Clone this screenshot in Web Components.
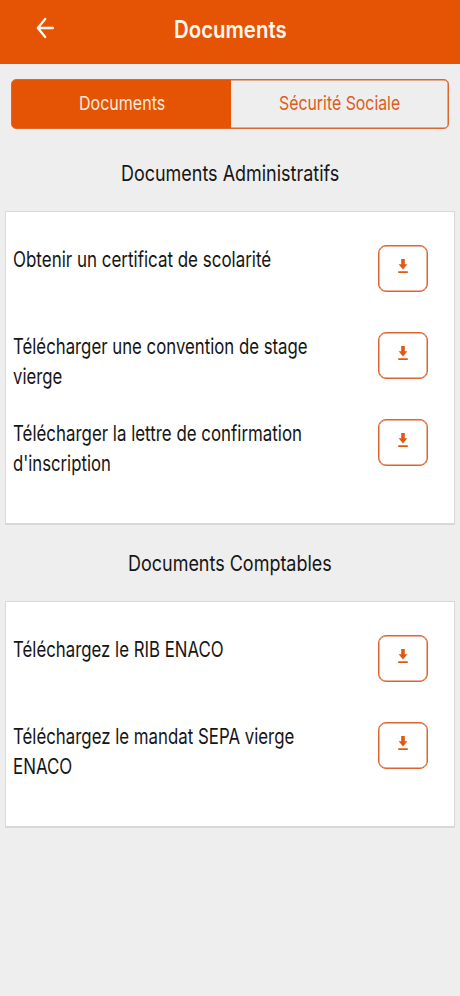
<!DOCTYPE html>
<html lang="fr">
<head>
<meta charset="utf-8">
<title>Documents</title>
<style>
    body {
        margin: 0;
        min-height: 996px;
        background: #eeeeee;
        color: #161616;
        font-family: Inter, "Liberation Sans", sans-serif;
        --brand: #e45404;
    }
</style>
</head>
<body>
<app-header><fit-line width="113">Documents</fit-line></app-header>
<tab-bar>
    <tab-item active><fit-line width="86">Documents</fit-line></tab-item>
    <tab-item><fit-line width="121">Sécurité Sociale</fit-line></tab-item>
</tab-bar>

<doc-section>
    <fit-line slot="title" width="218">Documents Administratifs</fit-line>
    <doc-row><fit-line width="258">Obtenir un certificat de scolarité</fit-line></doc-row>
    <doc-row>
        <fit-line width="295">Télécharger une convention de stage</fit-line>
        <fit-line width="49">vierge</fit-line>
    </doc-row>
    <doc-row>
        <fit-line width="289">Télécharger la lettre de confirmation</fit-line>
        <fit-line width="98">d'inscription</fit-line>
    </doc-row>
</doc-section>

<doc-section compact>
    <fit-line slot="title" width="204">Documents Comptables</fit-line>
    <doc-row><fit-line width="211">Téléchargez le RIB ENACO</fit-line></doc-row>
    <doc-row>
        <fit-line width="281">Téléchargez le mandat SEPA vierge</fit-line>
        <fit-line width="59">ENACO</fit-line>
    </doc-row>
</doc-section>

<script>
function makeTemplate(html) {
    const template = document.createElement("template");
    template.innerHTML = html;
    return template;
}

class BaseElement extends HTMLElement {
    constructor() {
        super();
        this.attachShadow({mode: "open"}).appendChild(this.constructor.template.content.cloneNode(true));
    }
}

class AppHeader extends BaseElement {
    static template = makeTemplate(`
        <style>
            :host {
                display: grid;
                grid-template-columns: 90px 1fr 90px;
                align-items: center;
                justify-items: center;
                box-sizing: border-box;
                height: 64px;
                padding-bottom: 4px;
                border-bottom: 1px solid #cc5a1c;
                background: var(--brand);
                color: #fff6ee;
                font-size: 24px;
                font-weight: 600;
                line-height: 29px;
            }
            svg {
                display: block;
                margin-bottom: 3px;
            }
        </style>
        <svg width="20" height="24" viewBox="0 0 20 24" fill="none" stroke="currentColor" stroke-width="2.3" stroke-linecap="round" stroke-linejoin="round">
            <path d="M10.2 3 2.8 12l7.4 9M3 12h15"/>
        </svg>
        <slot></slot>
    `);
}

class TabBar extends BaseElement {
    static template = makeTemplate(`
        <style>
            :host {
                display: grid;
                grid-template-columns: 1fr 1fr;
                box-sizing: border-box;
                height: 50px;
                margin: 15px 11px 0;
                border: 1px solid #d9662f;
                border-radius: 5px;
                box-shadow: inset 0 0 0 0.5px #d9662f;
                overflow: hidden;
            }
        </style>
        <slot></slot>
    `);
}

class TabItem extends BaseElement {
    static template = makeTemplate(`
        <style>
            :host {
                display: flex;
                align-items: center;
                justify-content: center;
                color: #de5c1c;
                font-size: 19px;
                line-height: 24px;
            }
            :host([active]) {
                margin-right: -1px;
                background: var(--brand);
                color: #fdeadb;
            }
        </style>
        <slot></slot>
    `);
}

class DocSection extends BaseElement {
    static template = makeTemplate(`
        <style>
            :host {
                display: block;
                font-size: 21.5px;
                line-height: 30px;
            }
            header {
                display: flex;
                justify-content: center;
                box-sizing: border-box;
                height: 82px;
                padding-top: 29px;
            }
            :host([compact]) header {
                height: 76px;
                padding-top: 23px;
            }
            .card {
                margin: 0 5px;
                padding: 32px 6px 42px 7px;
                border: 1px solid #d9d9d9;
                border-bottom: 2px solid #d8d8d8;
                box-sizing: border-box;
                background: #fff;
            }
        </style>
        <header><slot name="title"></slot></header>
        <div class="card"><slot></slot></div>
    `);
}

class DocRow extends BaseElement {
    static template = makeTemplate(`
        <style>
            :host {
                display: flex;
                justify-content: space-between;
                box-sizing: border-box;
                height: 87px;
                padding-right: 20px;
                line-height: 29.5px;
            }
            :host(:last-of-type) {
                height: 63px;
            }
            .label {
                padding-top: 1px;
            }
        </style>
        <div class="label"><slot></slot></div>
        <download-button></download-button>
    `);
}

class DownloadButton extends BaseElement {
    static template = makeTemplate(`
        <style>
            :host {
                display: flex;
                justify-content: center;
                box-sizing: border-box;
                width: 50px;
                height: 47px;
                margin-top: 1px;
                padding-top: 12px;
                border: 1px solid #dd6430;
                border-radius: 8px;
                box-shadow: inset 0 0 0 0.5px #dd6430;
                color: #df5913;
            }
        </style>
        <svg width="10" height="16" viewBox="0 0 10 16" fill="currentColor">
            <path d="M3.2 1h3.6v5.2h2.6L5 11.6.6 6.2h2.6zM.2 13.3h9.6V15H.2z"/>
        </svg>
    `);
}

// One line of text, condensed to the given width
class FitLine extends BaseElement {
    static template = makeTemplate(`
        <style>
            :host {
                display: block;
                white-space: nowrap;
            }
            span {
                display: inline-block;
                vertical-align: top;
                transform-origin: 0 50%;
            }
        </style>
        <span><slot></slot></span>
    `);

    connectedCallback() {
        const width = Number(this.getAttribute("width"));
        const span = this.shadowRoot.querySelector("span");
        this.style.width = width + "px";
        span.style.transform = "scaleX(" + width / span.offsetWidth + ")";
    }
}

customElements.define("app-header", AppHeader);
customElements.define("tab-bar", TabBar);
customElements.define("tab-item", TabItem);
customElements.define("doc-section", DocSection);
customElements.define("download-button", DownloadButton);
customElements.define("doc-row", DocRow);
customElements.define("fit-line", FitLine);
</script>
</body>
</html>
